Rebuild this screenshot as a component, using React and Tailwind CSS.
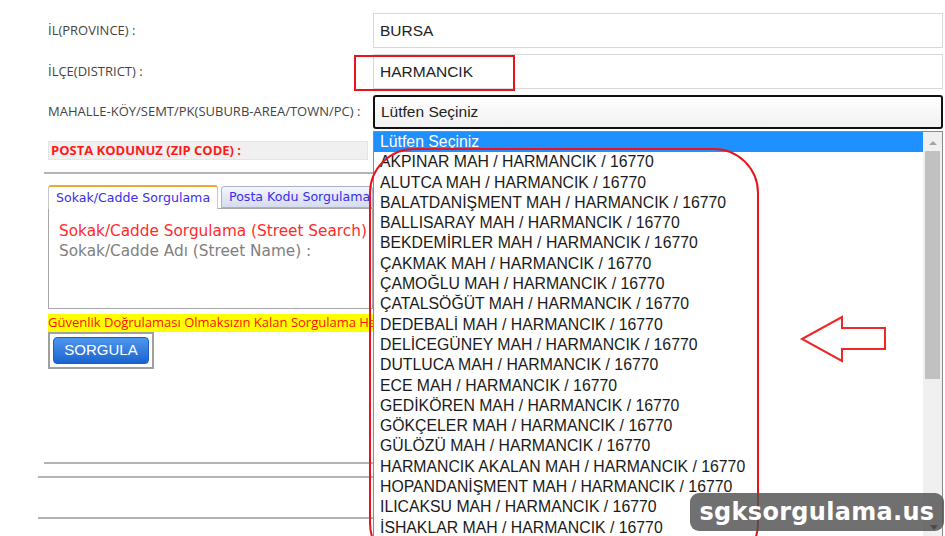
import React from "react";

const options = [
  "AKPINAR MAH / HARMANCIK / 16770",
  "ALUTCA MAH / HARMANCIK / 16770",
  "BALATDANİŞMENT MAH / HARMANCIK / 16770",
  "BALLISARAY MAH / HARMANCIK / 16770",
  "BEKDEMİRLER MAH / HARMANCIK / 16770",
  "ÇAKMAK MAH / HARMANCIK / 16770",
  "ÇAMOĞLU MAH / HARMANCIK / 16770",
  "ÇATALSÖĞÜT MAH / HARMANCIK / 16770",
  "DEDEBALİ MAH / HARMANCIK / 16770",
  "DELİCEGÜNEY MAH / HARMANCIK / 16770",
  "DUTLUCA MAH / HARMANCIK / 16770",
  "ECE MAH / HARMANCIK / 16770",
  "GEDİKÖREN MAH / HARMANCIK / 16770",
  "GÖKÇELER MAH / HARMANCIK / 16770",
  "GÜLÖZÜ MAH / HARMANCIK / 16770",
  "HARMANCIK AKALAN MAH / HARMANCIK / 16770",
  "HOPANDANİŞMENT MAH / HARMANCIK / 16770",
  "ILICAKSU MAH / HARMANCIK / 16770",
  "İSHAKLAR MAH / HARMANCIK / 16770",
];

const label = "text-[13px] text-[#444] font-['Open_Sans',sans-serif] whitespace-nowrap";
const field =
  "h-[35px] flex items-center px-[6px] border border-[#d8d8d8] text-[15.5px] text-[#222] font-['Liberation_Sans',Arial,sans-serif]";

const Row = ({ text, children }) => (
  <div className="grid grid-cols-[325px_1fr] items-center">
    <span className={label}>{text}</span>
    {children}
  </div>
);

export default function App() {
  return (
    <div className="relative w-[945px] h-[536px] overflow-hidden bg-white">
      {/* upper form */}
      <div className="flex flex-col gap-[6px] pt-[13px] pl-[48px] pr-[2px]">
        <Row text="İL(PROVINCE) :">
          <div className={field}>BURSA</div>
        </Row>
        <Row text="İLÇE(DISTRICT) :">
          <div className={field}>HARMANCIK</div>
        </Row>
        <Row text="MAHALLE-KÖY/SEMT/PK(SUBURB-AREA/TOWN/PC) :">
          <div className="h-[34px] flex items-center px-[6px] border-2 border-[#111] rounded-[3px] bg-gradient-to-b from-white to-[#f1f1f1] text-[15.5px] text-[#222] font-['Liberation_Sans',Arial,sans-serif]">
            Lütfen Seçiniz
          </div>
        </Row>
      </div>

      {/* left column below */}
      <div className="flex flex-col w-[325px] ml-[48px]">
        <div className="mt-[12px] w-[320px] h-[19px] flex items-center pl-[2px] bg-[#f0f0f0] border border-[#e4e4e4] text-[13px] font-bold text-[#ff1a1a] font-['Open_Sans',sans-serif]">
          POSTA KODUNUZ (ZIP CODE) :
        </div>
        <div className="mt-[12px] -ml-[4px] w-[329px] h-[2px] bg-[#b4b4b4]" />

        <div className="mt-[11px] flex items-end gap-[3px] font-['DejaVu_Sans',Verdana,sans-serif] text-[12.6px]">
          <div className="w-[170px] h-[24px] flex items-center pl-[7px] bg-white border border-[#c8c8c8] border-t-2 border-t-[#f0a830] rounded-t-[3px] border-b-0 text-[#3a2ee8] -mb-px relative z-[1]">
            Sokak/Cadde Sorgulama
          </div>
          <div className="flex-1 h-[22px] flex items-center pl-[7px] bg-gradient-to-b from-[#f4f6fc] to-[#d6dcef] border border-[#aab0c8] rounded-t-[3px] text-[#3a2ee8] whitespace-nowrap">
            Posta Kodu Sorgulama
          </div>
        </div>
        <div className="h-[101px] border border-[#a8a8a8] pt-[12px] pl-[10px] font-['DejaVu_Sans',Verdana,sans-serif] text-[15.3px] leading-[20px] whitespace-nowrap">
          <div className="text-[#ff2a2a]">Sokak/Cadde Sorgulama (Street Search)</div>
          <div className="text-[#808080]">Sokak/Cadde Adı (Street Name) :</div>
        </div>

        <div className="mt-[5px] h-[18px] flex items-center bg-[#ffff00] text-[13px] text-[#ff1010] whitespace-nowrap font-['Open_Sans',sans-serif]">
          Güvenlik Doğrulaması Olmaksızın Kalan Sorgulama Hakkınız
        </div>
        <div className="w-[106px] h-[37px] p-[3px] border-2 border-[#a0a0a0]">
          <div className="h-full flex items-center justify-center rounded-[4px] border border-[#1d5fc0] bg-gradient-to-b from-[#4d96ee] to-[#1a64d0] text-white text-[15px] font-['Liberation_Sans',Arial,sans-serif]">
            SORGULA
          </div>
        </div>

        <div className="mt-[93px] -ml-[4px] w-[329px] h-[2px] bg-[#b4b4b4]" />
        <div className="mt-[12px] -ml-[10px] w-[335px] h-[2px] bg-[#b4b4b4]" />
        <div className="mt-[39px] -ml-[10px] w-[335px] h-[2px] bg-[#b4b4b4]" />
      </div>

      {/* annotation box on district */}
      <div className="absolute left-[354px] top-[55px] w-[161px] h-[36px] border-2 border-[#e8141c]" />

      {/* open dropdown list */}
      <div className="absolute left-[373px] top-[131px] w-[570px] h-[420px] flex bg-white border border-[#8a8a8a] font-['Liberation_Sans',Arial,sans-serif] text-[15.8px] leading-[20.3px]">
        <div className="flex-1 flex flex-col whitespace-nowrap">
          <div className="pl-[6px] bg-[#1e90ff] text-white">Lütfen Seçiniz</div>
          {options.map((o) => (
            <div key={o} className="pl-[6px] text-[#1a1a1a]">
              {o}
            </div>
          ))}
        </div>
        <div className="w-[19px] flex flex-col items-center bg-[#f0f0f0]">
          <svg width="10" height="18" viewBox="0 0 10 18" className="mt-[1px]">
            <path d="M1 12 L5 8 L9 12 Z" fill="#a3a3a3" />
          </svg>
          <div className="w-[15px] h-[228px] bg-[#c1c1c1]" />
        </div>
      </div>

      {/* red annotation shape round the options */}
      <div className="absolute left-[369px] top-[148px] w-[390px] h-[420px] border-2 border-[#e8141c] rounded-[45px]" />

      {/* arrow */}
      <svg className="absolute left-[798px] top-[313px]" width="92" height="52" viewBox="798 313 92 52">
        <polygon
          points="802,339 842,317 842,328 885,328 885,349 842,349 842,361"
          fill="none"
          stroke="#ea2a2a"
          strokeWidth="2"
        />
      </svg>

      {/* down arrow of the scrollbar peeking out */}
      <svg className="absolute left-[929px] top-[524px]" width="10" height="8" viewBox="0 0 10 8">
        <path d="M1 1 L9 1 L5 6 Z" fill="#333" />
      </svg>

      {/* watermark */}
      <div className="absolute left-[690px] top-[493px] w-[254px] h-[38px] flex items-center justify-center rounded-[9px] bg-[rgba(80,80,80,0.82)] text-white text-[24px] font-bold tracking-[0.3px] font-['DejaVu_Sans',Verdana,sans-serif]">
        sgksorgulama.us
      </div>
    </div>
  );
}
